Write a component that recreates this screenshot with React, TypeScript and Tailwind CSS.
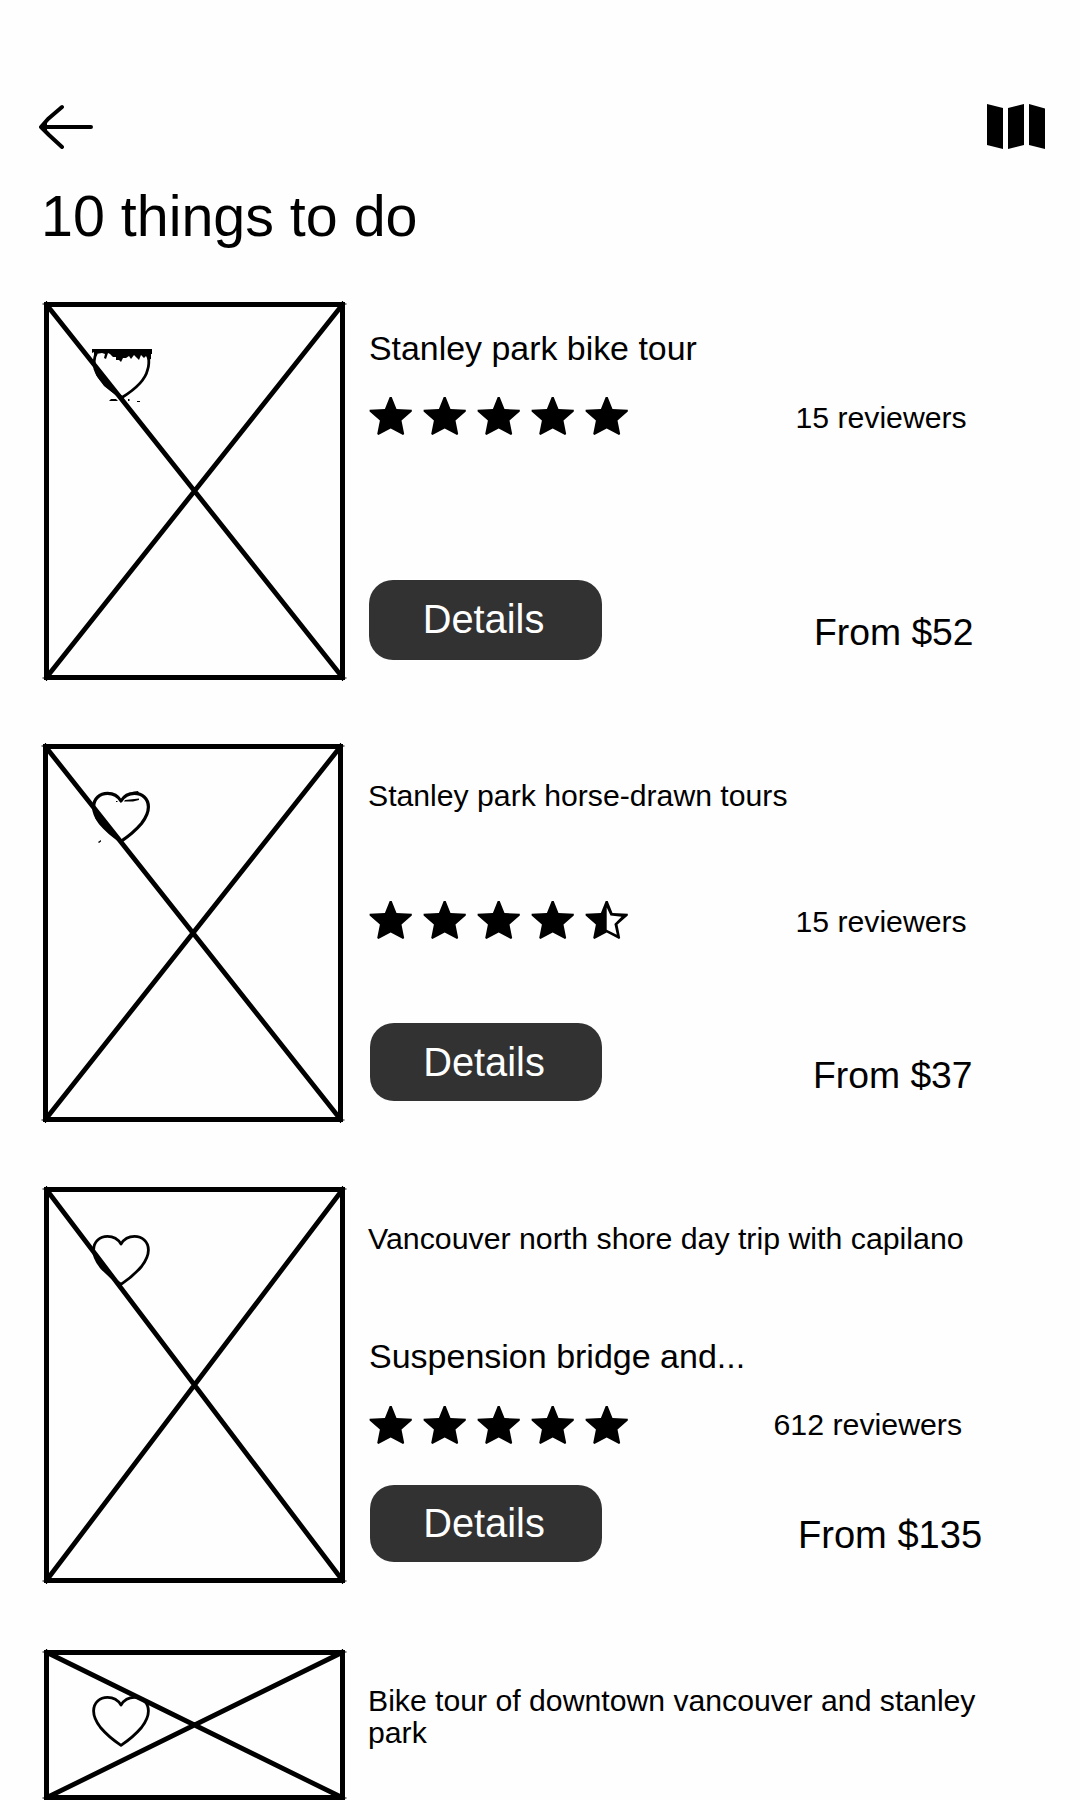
import type { ReactNode } from "react";

type HeartKind = "sketched" | "rough" | "shaded" | "plain";

const HEART =
  "M29 49.3 C24 46 14 38 8.5 31.5 C3.5 25 1.6 20 1.6 15 C1.6 6.5 8 1.4 15.5 1.4 C21 1.4 26 4 29 9 C32 4 37 1.4 42.5 1.4 C50 1.4 56.4 6.5 56.4 15 C56.4 20 54.5 25 49.5 31.5 C44 38 34 46 29 49.3 Z";

function Heart({ kind }: { kind: HeartKind }) {
  if (kind === "sketched") {
    return (
      <svg className="absolute left-12 top-[47px]" width="62" height="54" viewBox="0 0 62 54">
        <path
          d="M4.5 4 C2 8 1.5 15 3 20 C6 29 17 40 30 48.5 C42 41 53 32 55.5 21 C57 17 57 12 56.5 8"
          fill="none"
          stroke="#000"
          strokeWidth="2.8"
        />
        <path d="M2 15 L18 34 L30 48 L26 48 L12 37 L4 26 Z" />
        <path d="M0 0 H60 V5 H59 V10 L56 11 L54 7 L52 9 L49 6 L47 11 L45 9 L42 6 L39 10 L37 7 L34 9 L31 9 L29 13 L27 11 L24 11 L24 8 L21 8 L18 5 L16 4 L14 10 L12 9 L13 5 L10 4 L4 5 L2 8 V3 L0 4 Z" />
        <path d="M17 52 L19 50 H24 L26 52 Z M36 50 h1.5 v2 h-1.5 Z M45 52 h3 v1 h-3 Z" />
      </svg>
    );
  }
  return (
    <svg
      className={`absolute overflow-visible ${
        kind === "plain" ? "left-12 top-[46px]" : kind === "rough" ? "left-[49px] top-12" : "left-12 top-12"
      }`}
      width="58"
      height="51"
      viewBox="0 0 58 51"
    >
      <path
        d={HEART}
        fill="none"
        stroke="#000"
        strokeWidth={kind === "rough" ? 3.2 : 2.8}
        strokeLinejoin="round"
      />
      {kind === "rough" && (
        <path d="M2 16 L22 43 L12 36 L3 26 Z M24 9 h1.5 v1 h-1.5 Z M33 8 L47 6.5 V8 L41 9.5 H32 Z M40 0 L46 -1 L48 3 H40 Z M6 50 l3 -2 v1.5 l-2 1.5 Z" />
      )}
      {kind === "shaded" && <path d="M2 17 L20 40 L10 33 L3 24 Z" />}
    </svg>
  );
}

function Placeholder({ w, h, heart }: { w: number; h: number; heart: HeartKind }) {
  return (
    <div className="relative shrink-0">
      <svg width={w} height={h} viewBox={`0 0 ${w} ${h}`} className="block overflow-visible">
        <rect x="2.5" y="2.5" width={w - 5} height={h - 5} fill="none" stroke="#000" strokeWidth="5" />
        <path d={`M2 2 L${w - 2} ${h - 2} M${w - 2} 2 L2 ${h - 2}`} stroke="#000" strokeWidth="4.8" />
        <path
          d={`M-1.5 2 H4 M2.5 -1 V4 M${w - 4} 2 H${w + 1.5} M${w - 2.5} -1 V4 M-1.5 ${h - 2} H4 M2.5 ${h + 1} V${h - 4} M${w - 4} ${h - 2} H${w + 1.5} M${w - 2.5} ${h + 1} V${h - 4}`}
          stroke="#000"
          strokeWidth="1.2"
        />
      </svg>
      <Heart kind={heart} />
    </div>
  );
}

const STAR =
  "M20.7 0 H22.7 L27.5 12 L42.8 12.8 V14.5 L32.5 23.5 L35.2 37 L34 38 L21.7 31.5 L9.4 38 L8.2 37 L10.9 23.5 L0.6 14.5 V12.8 L15.9 12 Z";

function Star({ half }: { half?: boolean }) {
  return (
    <svg width="43" height="38" viewBox="0 0 43 38">
      <path d={STAR} />
      {half && <path d="M21.7 6.5 L25.5 14.6 L36.5 15.7 L29.4 23 L31.8 33.8 L21.7 28.8 Z" fill="#fefefe" />}
    </svg>
  );
}

function Stars({ half }: { half?: boolean }) {
  return (
    <div className="flex shrink-0 gap-[11px]">
      <Star />
      <Star />
      <Star />
      <Star />
      <Star half={half} />
    </div>
  );
}

function Ratings({ half, children }: { half?: boolean; children: ReactNode }) {
  return (
    <div className="flex h-[38px]">
      <Stars half={half} />
      {children}
    </div>
  );
}

function Details({ className }: { className: string }) {
  return (
    <button className={`shrink-0 rounded-[24px] bg-[#323232] pr-[4px] text-center text-[39.8px] text-white ${className}`}>
      Details
    </button>
  );
}

export default function App() {
  return (
    <main
      className="h-[1800px] w-[1080px] overflow-hidden bg-[#fefefe] pt-[104px] text-black"
      style={{ fontFamily: '"Liberation Sans", Arial, sans-serif' }}
    >
      <header className="flex h-[45px] justify-between pl-[39px] pr-[35px]">
        <svg width="55" height="45" viewBox="0 0 55 45" fill="none" stroke="#000" strokeWidth="4" strokeLinecap="round" strokeLinejoin="round">
          <path d="M2.5 23 H52 M23 3 L9 15 L2 23 L10 31 L23 43" />
          <path d="M3 22 L8 17 V28 Z" fill="#000" stroke="none" />
        </svg>
        <svg width="58" height="45" viewBox="0 0 58 45">
          <path d="M0 0 L16 4 V45 L0 41 Z M21 4 L37 0 V41 L21 45 Z M42 0 L58 4.5 V45 L42 41 Z" />
        </svg>
      </header>

      <h1 className="mt-[35px] pl-[41px] text-[57.4px] leading-[64px]">10 things to do</h1>

      <article className="ml-[44px] mt-[54px] flex h-[378px] gap-6">
        <Placeholder w={301} h={378} heart="sketched" />
        <div className="pt-[26px]">
          <h2 className="text-[33.9px] leading-[40px]">Stanley park bike tour</h2>
          <div className="mt-[29px]">
            <Ratings>
              <p className="ml-[167.5px] mt-0.5 whitespace-nowrap text-[30.2px] leading-[38px]">15 reviewers</p>
            </Ratings>
          </div>
          <div className="mt-[145px] flex">
            <Details className="h-20 w-[233px] pb-px leading-[79px]" />
            <p className="ml-[212px] mt-8 whitespace-nowrap text-[37.3px] leading-[40px]">From $52</p>
          </div>
        </div>
      </article>

      <article className="ml-[43px] mt-16 flex h-[378px] gap-[26px]">
        <Placeholder w={300} h={378} heart="rough" />
        <div className="pt-[34px]">
          <h2 className="-ml-px text-[30.2px] leading-[36px]">Stanley park horse-drawn tours</h2>
          <div className="mt-[87px]">
            <Ratings half>
              <p className="ml-[167.5px] mt-0.5 whitespace-nowrap text-[30.2px] leading-[38px]">15 reviewers</p>
            </Ratings>
          </div>
          <div className="mt-[84px] flex">
            <Details className="ml-px h-[78px] w-[232px] leading-[78px]" />
            <p className="ml-[211px] mt-8 whitespace-nowrap text-[37.3px] leading-[40px]">From $37</p>
          </div>
        </div>
      </article>

      <article className="ml-[44px] mt-[65px] flex h-[396px] gap-6">
        <Placeholder w={301} h={396} heart="shaded" />
        <div className="pt-[34px]">
          <h2 className="-ml-px whitespace-nowrap text-[30.3px] leading-[36px]">Vancouver north shore day trip with capilano</h2>
          <p className="mt-[79px] text-[34px] leading-[40px]">Suspension bridge and...</p>
          <div className="mt-[30px]">
            <Ratings>
              <p className="ml-[145.5px] whitespace-nowrap text-[30.3px] leading-[38px]">612 reviewers</p>
            </Ratings>
          </div>
          <div className="mt-[41px] flex">
            <Details className="ml-px h-[77px] w-[232px] leading-[77px]" />
            <p className="ml-[196px] mt-[30px] whitespace-nowrap text-[38.1px] leading-[40px]">From $135</p>
          </div>
        </div>
      </article>

      <article className="ml-[44px] mt-[67px] flex h-[150px] gap-6">
        <Placeholder w={301} h={150} heart="plain" />
        <h2 className="-ml-px w-[625px] pt-[35px] text-[30.2px] leading-[32px]">
          Bike tour of downtown vancouver and stanley park
        </h2>
      </article>
    </main>
  );
}
